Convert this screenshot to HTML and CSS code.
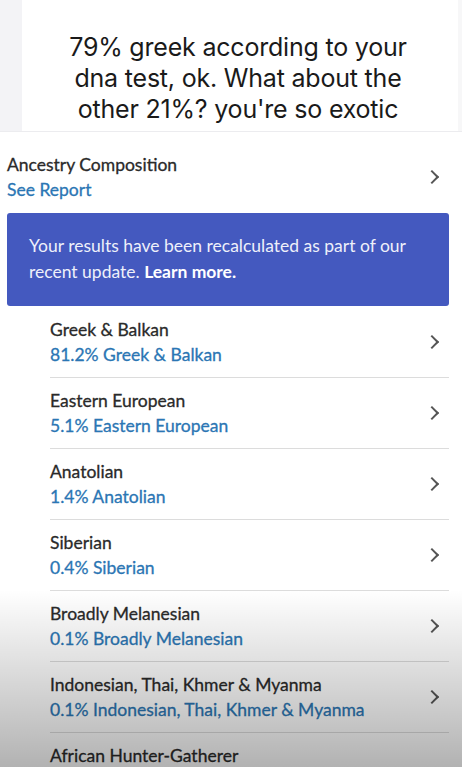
FILE: index.html
```html
<!DOCTYPE html>
<html lang="en">

<head>
  <meta charset="UTF-8">
  <meta name="viewport" content="width=device-width, initial-scale=1.0">
  <title>Ancestry Composition</title>
  <link rel="stylesheet" href="styles.css">
</head>

<body>
  <div class="story-top">
    <div class="left-strip"></div>
    <div class="caption">79% greek according to your dna test, ok. What about the other 21%? you're so exotic</div>
    <div class="right-strip"></div>
  </div>

  <div class="page">
    <div class="summary">
      <div class="summary-text">
        <div class="title">Ancestry Composition</div>
        <div class="link">See Report</div>
      </div>
      <span class="chevron"></span>
    </div>

    <div class="notice">
      Your results have been recalculated as part of our recent update. <b>Learn more.</b>
    </div>

    <div class="regions">
      <div class="region">
        <div>
          <div class="title">Greek &amp; Balkan</div>
          <div class="link">81.2% Greek &amp; Balkan</div>
        </div>
        <span class="chevron"></span>
      </div>
      <div class="region">
        <div>
          <div class="title">Eastern European</div>
          <div class="link">5.1% Eastern European</div>
        </div>
        <span class="chevron"></span>
      </div>
      <div class="region">
        <div>
          <div class="title">Anatolian</div>
          <div class="link">1.4% Anatolian</div>
        </div>
        <span class="chevron"></span>
      </div>
      <div class="region">
        <div>
          <div class="title">Siberian</div>
          <div class="link">0.4% Siberian</div>
        </div>
        <span class="chevron"></span>
      </div>
      <div class="region">
        <div>
          <div class="title">Broadly Melanesian</div>
          <div class="link">0.1% Broadly Melanesian</div>
        </div>
        <span class="chevron"></span>
      </div>
      <div class="region">
        <div>
          <div class="title">Indonesian, Thai, Khmer &amp; Myanma</div>
          <div class="link">0.1% Indonesian, Thai, Khmer &amp; Myanma</div>
        </div>
        <span class="chevron"></span>
      </div>
      <div class="region last">
        <div class="title">African Hunter-Gatherer</div>
      </div>
    </div>
  </div>

  <div class="shade"></div>
</body>

</html>
```

FILE: styles.css
```css
body {
  margin: 0;
  width: 462px;
  height: 767px;
  overflow: hidden;
  background: white;
  font-family: "Lato", "Noto Sans", sans-serif;
  position: relative;
}

.story-top {
  display: flex;
  height: 131px;
  border-bottom: 1px solid #ececef;
}

.left-strip {
  width: 22px;
  background: #f3f3f6;
}

.right-strip {
  width: 4px;
  background: #f7f7f8;
}

.caption {
  flex: 1;
  background: white;
  font-family: "Inter", "Noto Sans", sans-serif;
  font-size: 25px;
  line-height: 31px;
  color: #1a1a1a;
  text-align: center;
  padding: 32px 42px 0 38px;
  letter-spacing: -0.2px;
}

.page {
  padding: 20px 13px 0 7px;
}

.title {
  font-size: 17.5px;
  line-height: 25px;
  color: #2a2a2a;
  -webkit-text-stroke: 0.3px #2a2a2a;
}

.link {
  font-size: 17.5px;
  line-height: 25px;
  color: #2b76b4;
  -webkit-text-stroke: 0.3px #2b76b4;
}

.summary {
  display: flex;
  align-items: center;
  justify-content: space-between;
}

.chevron {
  width: 8px;
  height: 8px;
  border-right: 2px solid #555;
  border-bottom: 2px solid #555;
  transform: rotate(-45deg);
  margin-right: 12px;
}

.notice {
  margin-top: 11px;
  background: #4459bf;
  border-radius: 3px;
  padding: 20px 22px 21px;
  color: #eef0fa;
  font-size: 17.5px;
  line-height: 26px;
}

.notice b {
  color: white;
}

.regions {
  margin-left: 43px;
  padding-top: 1px;
}

.region {
  display: flex;
  align-items: center;
  justify-content: space-between;
  height: 70px;
  border-bottom: 1px solid #dcdcdc;
}

.region.last {
  height: 24px;
  padding-top: 10px;
  border-bottom: none;
}

.shade {
  position: absolute;
  left: 0;
  right: 0;
  top: 590px;
  bottom: 0;
  background: linear-gradient(to bottom, rgba(0, 0, 0, 0), rgba(0, 0, 0, 0.3));
  pointer-events: none;
}
```
